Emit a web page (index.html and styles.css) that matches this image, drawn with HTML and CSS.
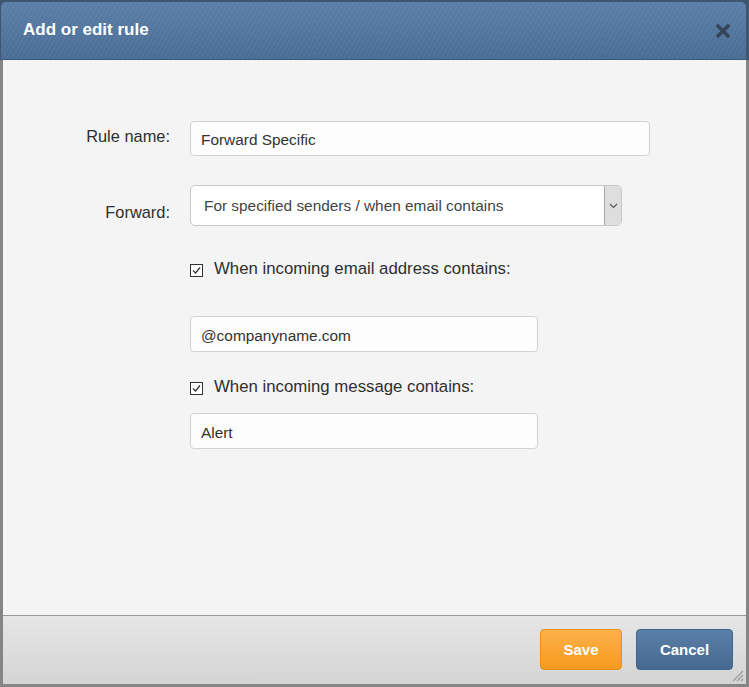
FILE: index.html
```html
<!DOCTYPE html>
<html>
<head>
<meta charset="utf-8">
<link rel="stylesheet" href="styles.css">
</head>
<body>
<div class="dialog">
  <div class="header">
    <h1 class="title">Add or edit rule</h1>
    <svg class="close" width="14" height="14" viewBox="0 0 14 14"><path d="M2 2L12 12M12 2L2 12" stroke="#364658" stroke-width="3.6" stroke-linecap="round"/></svg>
  </div>
  <div class="content">
    <div class="row row-name">
      <label class="label label-name">Rule name:</label>
      <div class="input input-wide">Forward Specific</div>
    </div>
    <div class="row row-forward">
      <label class="label label-forward">Forward:</label>
      <div class="select">
        <span class="select-text">For specified senders / when email contains</span>
        <span class="select-btn"><svg width="9" height="6" viewBox="0 0 9 6"><path d="M1 1L4.5 4.5L8 1" fill="none" stroke="#555" stroke-width="1.2"/></svg></span>
      </div>
    </div>
    <div class="row row-check1">
      <span class="label"></span>
      <div class="check"><span class="box"><svg width="11" height="11" viewBox="0 0 11 11"><path d="M2 5.5L4.5 8L9 2.5" fill="none" stroke="#333" stroke-width="1.2"/></svg></span><span class="check-text">When incoming email address contains:</span></div>
    </div>
    <div class="row row-email">
      <span class="label"></span>
      <div class="input input-mid">@companyname.com</div>
    </div>
    <div class="row row-check2">
      <span class="label"></span>
      <div class="check"><span class="box"><svg width="11" height="11" viewBox="0 0 11 11"><path d="M2 5.5L4.5 8L9 2.5" fill="none" stroke="#333" stroke-width="1.2"/></svg></span><span class="check-text">When incoming message contains:</span></div>
    </div>
    <div class="row row-msg">
      <span class="label"></span>
      <div class="input input-mid">Alert</div>
    </div>
  </div>
  <div class="footer">
    <button class="btn btn-save">Save</button>
    <button class="btn btn-cancel">Cancel</button>
    <svg class="grip" width="14" height="14" viewBox="0 0 14 14"><path d="M13 3L3 13M13 7L7 13M13 11L11 13" stroke="#9a9a9a" stroke-width="1.2"/></svg>
  </div>
</div>
</body>
</html>
```

FILE: styles.css
```css
html, body {
  margin: 0;
  padding: 0;
  background: #7a7a7a;
}
body {
  font-family: "Liberation Sans", Arial, sans-serif;
}
.dialog {
  width: 749px;
  height: 687px;
  box-sizing: border-box;
  padding: 2px 3px 3px 3px;
  background: linear-gradient(#3f5670 0, #3f5670 60px, #858585 60px, #858585 100%);
  display: flex;
  flex-direction: column;
}
.header {
  height: 57px;
  margin-left: -2px;
  border-bottom: 1px solid #3d5877;
  border-radius: 5px 5px 0 0;
  background:
    repeating-linear-gradient(-60deg, rgba(255,255,255,0.05) 0 1px, rgba(255,255,255,0) 1px 4px),
    linear-gradient(#5b7fa7, #4a6d96);
  display: flex;
  align-items: center;
  justify-content: space-between;
  padding: 0 16px 0 22px;
  flex-shrink: 0;
}
.title {
  margin: 0;
  font-size: 17px;
  font-weight: bold;
  color: #fff;
  padding-bottom: 2px;
}
.close {
  margin-top: 0;
}
.content {
  flex: 1;
  background: #f4f4f4;
  padding-top: 61px;
  display: flex;
  flex-direction: column;
}
.row {
  display: grid;
  grid-template-columns: 167px auto;
  column-gap: 20px;
  justify-items: start;
}
.label {
  justify-self: end;
  font-size: 16.4px;
  color: #2f2f2f;
  line-height: 20px;
}
.label-name { padding-top: 5px; }
.label-forward { padding-top: 17px; }
.row-forward { margin-top: 29px; }
.row-check1 { margin-top: 32px; }
.row-email { margin-top: 37px; }
.row-check2 { margin-top: 24px; }
.row-msg { margin-top: 16px; }
.input {
  box-sizing: border-box;
  height: 35px;
  border: 1px solid #d2d2d2;
  border-radius: 4px;
  background: #fdfdfd;
  font-size: 15.4px;
  color: #333;
  line-height: 33px;
  padding-left: 10px;
  padding-top: 1px;
}
.input-wide { width: 460px; }
.input-mid { width: 348px; height: 36px; line-height: 34px; padding-top: 2px; }
.select {
  box-sizing: border-box;
  width: 432px;
  height: 41px;
  border: 1px solid #c8c8c8;
  border-radius: 5px;
  background: #fff;
  display: flex;
  align-items: stretch;
  overflow: hidden;
}
.select-text {
  flex: 1;
  font-size: 15.4px;
  color: #444;
  line-height: 39px;
  padding-left: 13px;
}
.select-btn {
  width: 16px;
  background: #dedede;
  border-left: 1px solid #aaa;
  display: flex;
  align-items: center;
  justify-content: center;
}
.check {
  display: flex;
  align-items: center;
  height: 20px;
  padding-top: 1px;
}
.box {
  box-sizing: border-box;
  width: 13px;
  height: 13px;
  border: 1px solid #333;
  background: #fff;
  display: flex;
  align-items: center;
  justify-content: center;
  margin-top: 2px;
}
.box svg { display: block; }
.check-text {
  margin-left: 11px;
  font-size: 16.8px;
  color: #2f2f2f;
}
.footer {
  height: 69px;
  flex-shrink: 0;
  border-top: 1px solid #9a9a9a;
  background: linear-gradient(#e6e6e6, #d4d4d4);
  display: flex;
  align-items: center;
  justify-content: flex-end;
  padding-right: 13px;
  padding-bottom: 2px;
  box-sizing: border-box;
  position: relative;
}
.btn {
  height: 41px;
  border-radius: 4px;
  font-family: "Liberation Sans", Arial, sans-serif;
  font-size: 15px;
  font-weight: bold;
  color: #fff;
  padding: 0;
  margin-top: 1px;
}
.btn-save {
  width: 82px;
  border: 1px solid #e5901a;
  background: linear-gradient(#fcb24a, #f79a1e);
}
.btn-cancel {
  width: 97px;
  margin-left: 14px;
  border: 1px solid #40648c;
  background: linear-gradient(#5a7fa8, #46698f);
}
.grip {
  position: absolute;
  right: 2px;
  bottom: 2px;
}
```
